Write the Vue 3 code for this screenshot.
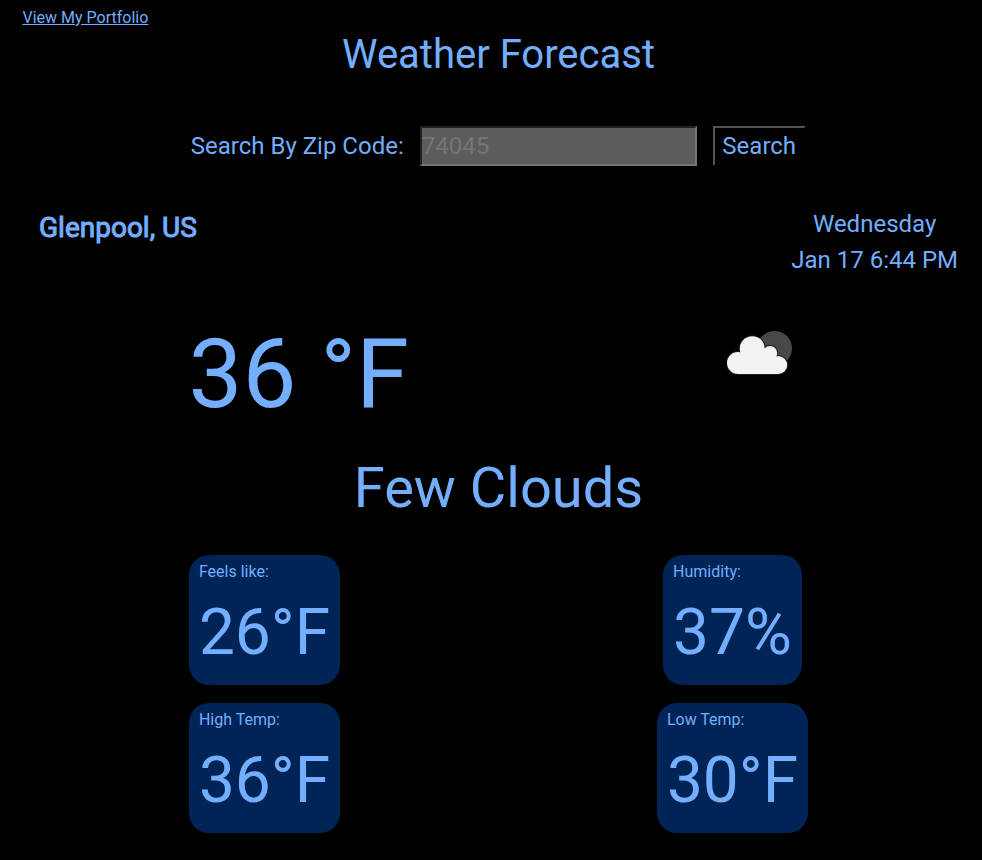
<script setup>
const stats = [
  { label: 'Feels like:', value: '26°F' },
  { label: 'Humidity:', value: '37%' },
  { label: 'High Temp:', value: '36°F' },
  { label: 'Low Temp:', value: '30°F' },
]
</script>

<template>
  <main class="app">
    <nav><a href="#">View My Portfolio</a></nav>
    <h1>Weather Forecast</h1>
    <form class="search" @submit.prevent>
      <label for="zip">Search By Zip Code:</label>
      <input id="zip" type="text" placeholder="74045" />
      <button type="submit">Search</button>
    </form>
    <header class="place">
      <h2>Glenpool, US</h2>
      <div class="date"><div>Wednesday</div><div>Jan 17 6:44 PM</div></div>
    </header>
    <section class="current">
      <div class="temp">36 °F</div>
      <div class="icon">
        <svg width="66" height="44" viewBox="0 0 66 44">
          <defs>
            <g id="cloud">
              <circle cx="11" cy="32" r="11" />
              <circle cx="25.3" cy="17.7" r="12.5" />
              <circle cx="43" cy="22.2" r="7.2" />
              <circle cx="51.2" cy="34" r="9" />
              <path d="M11 43V24L25 14L43 20L51 30V43Z" />
            </g>
          </defs>
          <circle cx="47.7" cy="17.3" r="17.3" fill="#484848" />
          <use href="#cloud" fill="#000" stroke="#1c1c1c" stroke-width="2" />
          <use href="#cloud" fill="#f2f2f1" />
        </svg>
      </div>
    </section>
    <div class="description">Few Clouds</div>
    <section class="stats">
      <div v-for="s in stats" :key="s.label" class="card">
        <div class="label">{{ s.label }}</div>
        <div class="value">{{ s.value }}</div>
      </div>
    </section>
  </main>
</template>

<style>
body { background: #000; }
</style>
<style scoped>
* { box-sizing: border-box; }
.app { height: 860px; padding: 6px 8px 0 23px; overflow: hidden; background: #000; color: #73aeff; font-family: Roboto, sans-serif; font-size: 16px; line-height: 24px; }
nav { height: 24px; margin-left: -0.5px; }
a { color: inherit; }
h1 { margin: 1px 0 0; height: 48px; line-height: 48px; font-size: 40px; font-weight: 400; text-align: center; }
.search { display: flex; justify-content: center; align-items: center; gap: 16px; height: 40px; margin-top: 47px; font-size: 24px; }
label { margin-left: -0.5px; }
input { width: 277px; height: 40px; padding: 1px 0; border: 2px inset #767676; background: #5c5c5c; font: inherit; color: inherit; }
input::placeholder { color: #757575; }
button { width: 93px; height: 40px; padding: 0; border: 2px outset #000; background: #000; color: inherit; font: inherit; }
.place { display: flex; justify-content: space-between; padding: 0 16px; margin-top: 40px; }
h2 { margin: 4px 0 0; font-size: 28px; line-height: 36px; font-weight: 400; -webkit-text-stroke: 1px currentColor; }
.date { font-size: 24px; line-height: 36px; text-align: center; }
.current { display: grid; grid-template-columns: 1fr 1fr; height: 144px; margin-top: 24px; justify-items: center; }
.temp { font-size: 96px; line-height: 144px; padding-left: 76px; }
.icon { padding: 29px 0 0 47px; }
.description { height: 84px; line-height: 84px; font-size: 56px; text-align: center; }
.stats { display: grid; grid-template-columns: 483px 453px; row-gap: 18px; margin-top: 25px; }
.card { justify-self: center; height: 130px; padding: 5px 10px; border-radius: 20px; background: #002455; }
.value { font-size: 64px; line-height: 98px; }
</style>
